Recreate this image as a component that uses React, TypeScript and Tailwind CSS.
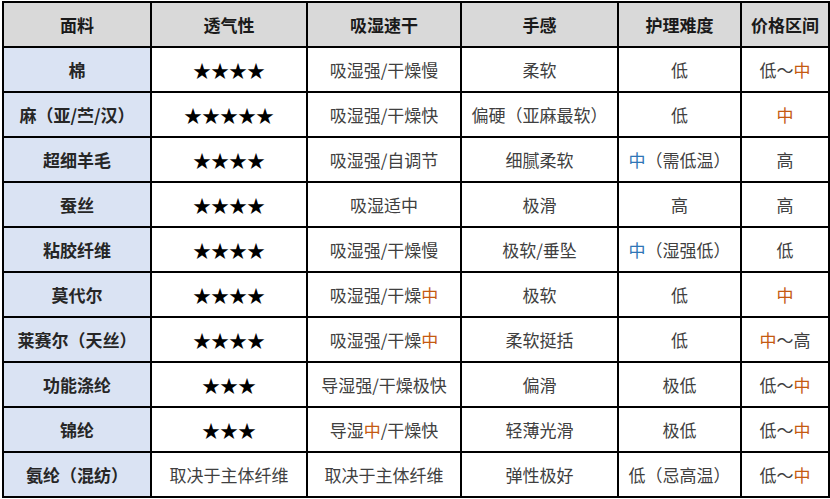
import React from "react";

type Cell = React.ReactNode;

const O = ({ children }: { children: React.ReactNode }) => (
  <span className="text-[#c55a11]">{children}</span>
);
const B = ({ children }: { children: React.ReactNode }) => (
  <span className="text-[#2e75b6]">{children}</span>
);

const rows: Cell[][] = [
  ["棉", "★★★★", "吸湿强/干燥慢", "柔软", "低", <>低～<O>中</O></>],
  ["麻（亚/苎/汉）", "★★★★★", "吸湿强/干燥快", "偏硬（亚麻最软）", "低", <O>中</O>],
  ["超细羊毛", "★★★★", "吸湿强/自调节", "细腻柔软", <><B>中</B>（需低温）</>, "高"],
  ["蚕丝", "★★★★", "吸湿适中", "极滑", "高", "高"],
  ["粘胶纤维", "★★★★", "吸湿强/干燥慢", "极软/垂坠", <><B>中</B>（湿强低）</>, "低"],
  ["莫代尔", "★★★★", <>吸湿强/干燥<O>中</O></>, "极软", "低", <O>中</O>],
  ["莱赛尔（天丝）", "★★★★", <>吸湿强/干燥<O>中</O></>, "柔软挺括", "低", <><O>中</O>～高</>],
  ["功能涤纶", "★★★", "导湿强/干燥极快", "偏滑", "极低", <>低～<O>中</O></>],
  ["锦纶", "★★★", <>导湿<O>中</O>/干燥快</>, "轻薄光滑", "极低", <>低～<O>中</O></>],
  ["氨纶（混纺）", <span>取决于主体纤维</span>, "取决于主体纤维", "弹性极好", "低（忌高温）", <>低～<O>中</O></>],
];

const headers = ["面料", "透气性", "吸湿速干", "手感", "护理难度", "价格区间"];
const widths = [148, 156, 154, 157, 123, 88];

export default function App() {
  return (
    <div
      className="w-[830px] h-[499px] bg-white overflow-hidden pl-[2px] pt-[1px]"
      style={{ fontFamily: '"Noto Sans CJK SC", "Noto Sans", sans-serif' }}
    >
      <table className="border-collapse table-fixed w-[827px] text-[17px] leading-none">
        <colgroup>
          {widths.map((w, i) => (
            <col key={i} style={{ width: w }} />
          ))}
        </colgroup>
        <thead>
          <tr className="h-[45px] bg-[#d9d9d9]">
            {headers.map((h) => (
              <th
                key={h}
                className="border-2 border-black text-center font-bold text-[#1a1a1a] p-0"
              >
                {h}
              </th>
            ))}
          </tr>
        </thead>
        <tbody>
          {rows.map((r, ri) => (
            <tr key={ri} className="h-[45px]">
              {r.map((c, ci) => (
                <td
                  key={ci}
                  className={
                    "border-2 border-black text-center p-0 whitespace-nowrap " +
                    (ci === 0
                      ? "bg-[#dae3f3] font-bold text-[#262626]"
                      : ci === 1 && typeof c === "string"
                      ? "text-black text-[18px]"
                      : "text-[#404040]")
                  }
                >
                  {c}
                </td>
              ))}
            </tr>
          ))}
        </tbody>
      </table>
    </div>
  );
}
